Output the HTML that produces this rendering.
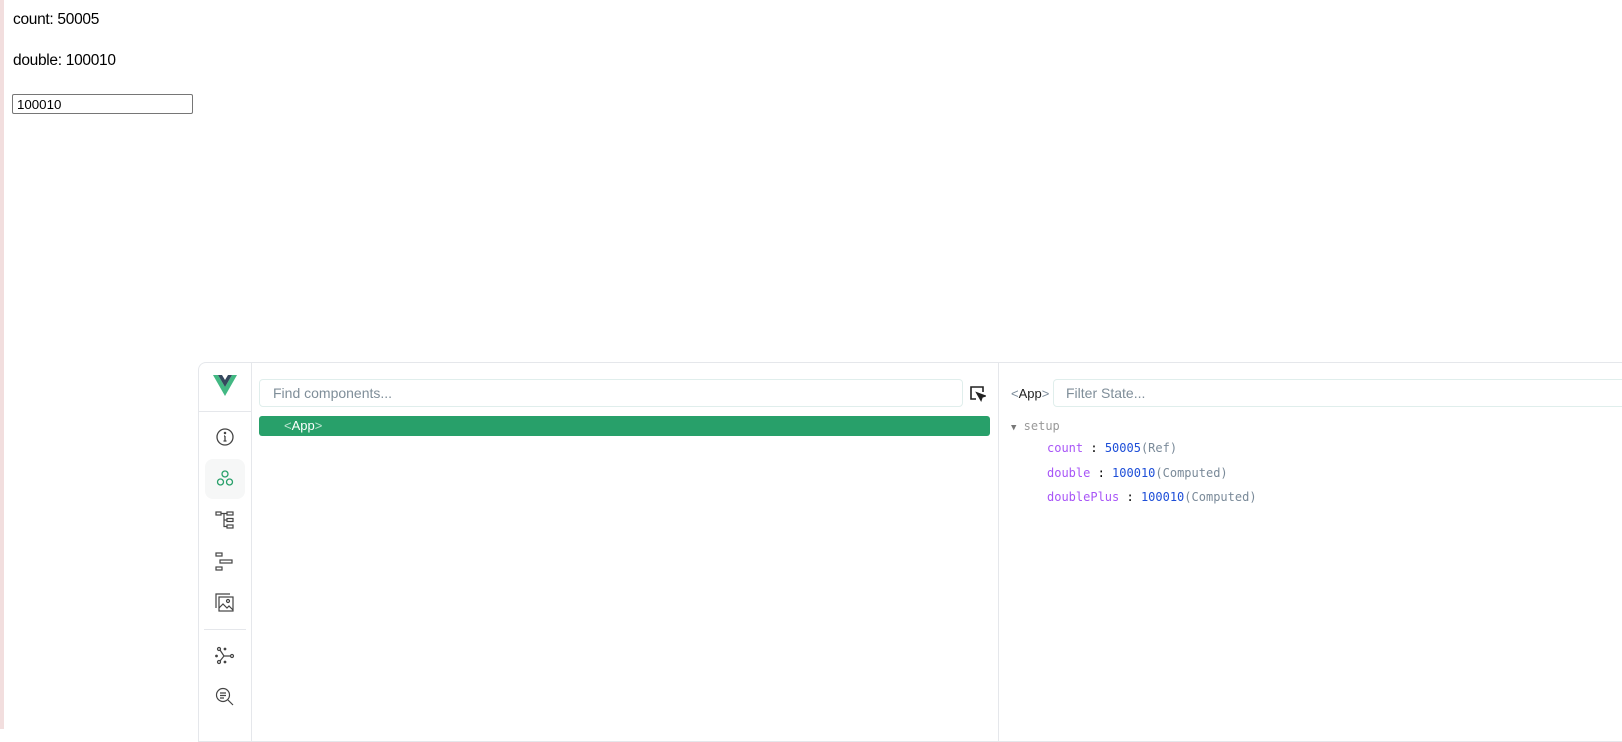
<!DOCTYPE html>
<html><head><style>
body{margin:0;width:1622px;height:729px;overflow:hidden;background:#fff;font-family:"Liberation Sans",sans-serif;position:relative}
.lb{position:absolute;left:0;top:0;width:4px;height:729px;background:#f2dede}
.t{position:absolute;left:13px;font-size:15.5px;color:#000;letter-spacing:-0.3px}
.inp{position:absolute;left:12px;top:94px;width:181px;height:20px;border:1px solid #767676;border-radius:2px;font-size:13.3px;line-height:19px;padding-left:4px;box-sizing:border-box}
.panel{position:absolute;left:198px;top:362px;width:1424px;height:380px;border:1px solid #e5e7eb;border-right:none;border-radius:8px 0 0 0;box-sizing:border-box;background:#fff}
.side{position:absolute;left:0;top:0;width:52px;height:100%;border-right:1px solid #e5e7eb}
.mid{position:absolute;left:52px;top:0;width:747px;height:100%;border-right:1px solid #e5e7eb}
.ic{position:absolute;left:16px}
.find{position:absolute;left:8px;top:16px;width:704px;height:28px;border:1px solid #e0eeec;border-radius:4px;box-sizing:border-box;font-size:14px;color:#7f8e99;padding-left:13px;line-height:26px}
.app{position:absolute;left:8px;top:53px;width:731px;height:20px;background:#28a06a;border-radius:3px;color:#fff;font-size:13px;line-height:20px;padding-left:25px;box-sizing:border-box}
.app span{color:#bfe5d2}
.mono{font-family:"DejaVu Sans Mono","Liberation Mono",monospace;font-size:12px}
.r{position:absolute;left:800px;top:0}
.p{color:#a855f7}.v{color:#1d4ed8}.g{color:#7a8a99}
</style></head><body>
<div class="lb"></div>
<div class="t" style="top:11px">count: 50005</div>
<div class="t" style="top:52px">double: 100010</div>
<div class="inp">100010</div>
<div class="panel">
 <div class="side">
  <svg style="position:absolute;left:14px;top:12px" width="24" height="22" viewBox="0 0 24 22"><path d="M0 0h5l7 12 7-12h5L12 21z" fill="#42b883"/><path d="M5 0h4l3 5 3-5h4L12 12z" fill="#35495e"/></svg>
  <div style="position:absolute;left:0;top:48px;width:52px;border-top:1px solid #e5e7eb"></div>
  <svg class="ic" style="top:64px" width="20" height="20" viewBox="0 0 20 20" fill="none" stroke="#444" stroke-width="1.3"><circle cx="10" cy="10" r="8"/><path d="M10 9v5M8.5 14h3M9 9h1"/><circle cx="10" cy="6" r=".6" fill="#444"/></svg>
  <div style="position:absolute;left:6px;top:96px;width:40px;height:40px;background:#f6f7f7;border-radius:8px"></div>
  <svg class="ic" style="top:106px" width="20" height="20" viewBox="0 0 20 20" fill="none" stroke="#28a06a" stroke-width="1.3"><circle cx="10" cy="5" r="3"/><circle cx="5.5" cy="13" r="3"/><circle cx="14.5" cy="13" r="3"/></svg>
  <svg class="ic" style="top:147px" width="20" height="20" viewBox="0 0 20 20" fill="none" stroke="#444" stroke-width="1.2"><rect x="1" y="2" width="5" height="3"/><rect x="12" y="2" width="6" height="3"/><rect x="12" y="8.5" width="6" height="3"/><rect x="12" y="15" width="6" height="3"/><path d="M6 3.5h6M9 3.5v13h3M9 10h3"/></svg>
  <svg class="ic" style="top:189px" width="20" height="20" viewBox="0 0 20 20" fill="none" stroke="#444" stroke-width="1.2"><rect x="1" y="1" width="6" height="3"/><rect x="5" y="8" width="12" height="3"/><rect x="1" y="15" width="6" height="3"/></svg>
  <svg class="ic" style="top:230px" width="20" height="20" viewBox="0 0 20 20" fill="none" stroke="#444" stroke-width="1.2"><path d="M1 15V1h14"/><rect x="4" y="4" width="14" height="14"/><circle cx="13" cy="8" r="1.5"/><path d="M4 15l4-4 4 4 2-2 4 4"/></svg>
  <div style="position:absolute;left:5px;top:266px;width:42px;border-top:1px solid #e5e7eb"></div>
  <svg class="ic" style="top:283px" width="20" height="20" viewBox="0 0 20 20" fill="none" stroke="#444" stroke-width="1.2"><circle cx="4" cy="3" r="1.5"/><circle cx="4" cy="16" r="1.5"/><circle cx="17" cy="10" r="1.5"/><path d="M5 4l4 6-4 5M9 10h6"/><circle cx="1.5" cy="10" r=".8" fill="#444"/><circle cx="10" cy="3" r=".8" fill="#444"/><circle cx="10" cy="16" r=".8" fill="#444"/></svg>
  <svg class="ic" style="top:324px" width="20" height="20" viewBox="0 0 20 20" fill="none" stroke="#444" stroke-width="1.2"><circle cx="8" cy="8" r="6.5"/><path d="M13 13l5 5M5 6h6M5 8.5h6M5 11h4"/></svg>
 </div>
 <div class="mid">
  <div class="find">Find components...</div>
  <svg style="position:absolute;left:718px;top:22px" width="17" height="17" viewBox="0 0 17 17" fill="none" stroke="#222" stroke-width="1.6"><path d="M7 14H2V2h12v5"/><path d="M8 8l8 3-3 1-1 3z" fill="#222"/></svg>
  <div class="app"><span>&lt;</span>App<span>&gt;</span></div>
 </div>
 <div class="r">
  <div style="position:absolute;left:12px;top:23px;font-size:13px;color:#222;white-space:nowrap"><span class="g">&lt;</span>App<span class="g">&gt;</span></div>
  <div style="position:absolute;left:54px;top:16px;width:600px;height:28px;border:1px solid #e0eeec;border-radius:4px;box-sizing:border-box;font-size:14px;color:#7f8e99;padding-left:12px;line-height:26px">Filter State...</div>
  <div class="mono" style="position:absolute;left:12px;top:56px;color:#999;white-space:nowrap"><span style="font-size:9px;color:#777">▼</span> setup</div>
  <div class="mono" style="position:absolute;left:48px;top:78px;white-space:nowrap"><span class="p">count</span> : <span class="v">50005</span><span class="g">(Ref)</span></div>
  <div class="mono" style="position:absolute;left:48px;top:103px;white-space:nowrap"><span class="p">double</span> : <span class="v">100010</span><span class="g">(Computed)</span></div>
  <div class="mono" style="position:absolute;left:48px;top:127px;white-space:nowrap"><span class="p">doublePlus</span> : <span class="v">100010</span><span class="g">(Computed)</span></div>
 </div>
</div>
</body></html>
